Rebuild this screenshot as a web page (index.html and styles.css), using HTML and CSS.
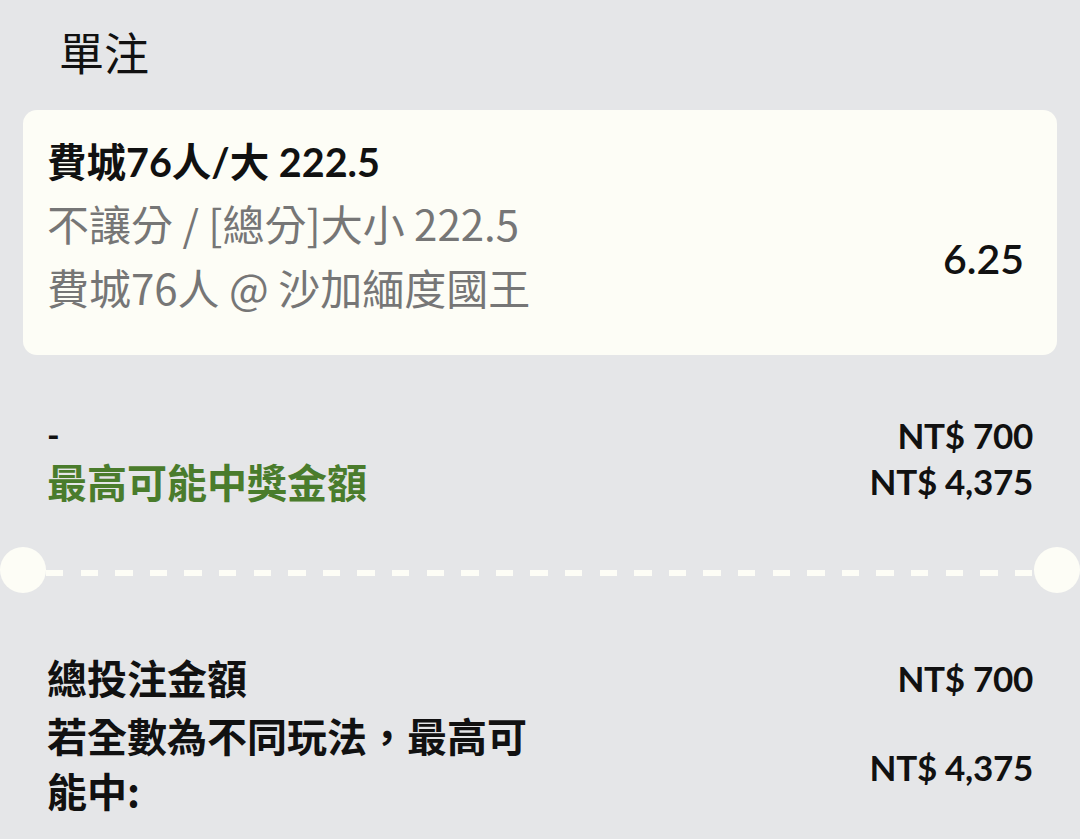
FILE: index.html
```html
<!DOCTYPE html>
<html lang="zh-Hant">
<head>
<meta charset="utf-8">
<title>單注</title>
<link rel="stylesheet" href="styles.css">
</head>
<body>
<div class="page">
  <div class="header">單注</div>

  <div class="card">
    <div class="bet-title">費城76人/大 222.5</div>
    <div class="bet-row">
      <div class="bet-desc">
        <div class="desc-line">不讓分 / [總分]大小 222.5</div>
        <div class="desc-line">費城76人 @ 沙加緬度國王</div>
      </div>
      <div class="odds">6.25</div>
    </div>
  </div>

  <div class="stake">
    <div class="line-row">
      <div class="stake-label">-</div>
      <div class="amount">NT$ 700</div>
    </div>
    <div class="line-row">
      <div class="win-label">最高可能中獎金額</div>
      <div class="amount">NT$ 4,375</div>
    </div>
  </div>

  <div class="divider">
    <div class="notch"></div>
    <div class="dashes"></div>
    <div class="notch"></div>
  </div>

  <div class="summary">
    <div class="sum-row">
      <div class="sum-label">總投注金額</div>
      <div class="amount">NT$ 700</div>
    </div>
    <div class="sum-row">
      <div class="sum-label wrap">若全數為不同玩法，最高可能中:</div>
      <div class="amount">NT$ 4,375</div>
    </div>
  </div>
</div>
</body>
</html>
```

FILE: styles.css
```css
html, body {
  margin: 0;
  padding: 0;
}
body {
  background: #e5e6e8;
  font-family: Lato, "Noto Sans CJK TC", sans-serif;
  color: #111;
  width: 1080px;
  height: 839px;
  overflow: hidden;
}
.page {
  display: flex;
  flex-direction: column;
}
.header {
  font-family: "Noto Sans CJK TC", sans-serif;
  font-size: 45px;
  line-height: 104px;
  height: 110px;
  padding-left: 59px;
  color: #111;
}
.card {
  margin: 0 23px;
  background: #fdfdf6;
  border-radius: 14px;
  padding: 23px 33px 36px 24px;
  display: flex;
  flex-direction: column;
}
.bet-title {
  font-family: Lato, "Noto Sans CJK TC", sans-serif;
  font-weight: 700;
  font-size: 39.5px;
  line-height: 58px;
  color: #111;
}
.bet-row {
  display: flex;
  align-items: center;
  justify-content: space-between;
}
.desc-line {
  font-family: "Noto Sans CJK TC", sans-serif;
  font-size: 42px;
  line-height: 64px;
  color: #767676;
}
.odds {
  font-family: Lato, sans-serif;
  font-weight: 600;
  font-size: 41px;
  color: #111;
  margin-top: 6px;
}
.stake {
  padding: 57px 47px 0 47px;
  display: flex;
  flex-direction: column;
}
.line-row {
  display: flex;
  justify-content: space-between;
  align-items: center;
  height: 46px;
}
.stake-label {
  font-weight: 700;
  font-size: 34px;
  line-height: 40px;
}
.win-label {
  font-family: "Noto Sans CJK TC", sans-serif;
  font-weight: 700;
  font-size: 40px;
  line-height: 44px;
  color: #4a7c2c;
}
.amount {
  font-family: Lato, sans-serif;
  font-weight: 700;
  font-size: 35px;
  letter-spacing: -0.3px;
  color: #111;
  white-space: nowrap;
}
.divider {
  display: flex;
  align-items: center;
  margin-top: 43px;
  height: 46px;
}
.notch {
  width: 46px;
  height: 46px;
  border-radius: 50%;
  background: #fdfdf6;
  flex: none;
}
.dashes {
  flex: 1;
  height: 6px;
  margin-top: 6px;
  background: repeating-linear-gradient(to right, #fdfdf6 0 17.5px, transparent 17.5px 34.6px);
}
.summary {
  padding: 57px 47px 0 47px;
  display: flex;
  flex-direction: column;
  gap: 3px;
}
.sum-row {
  display: flex;
  justify-content: space-between;
  align-items: center;
}
.sum-row + .sum-row .amount {
  margin-top: 8px;
}
.sum-label {
  font-family: "Noto Sans CJK TC", sans-serif;
  font-weight: 700;
  font-size: 40px;
  line-height: 55px;
  color: #111;
}
.sum-label.wrap {
  max-width: 500px;
}
```
